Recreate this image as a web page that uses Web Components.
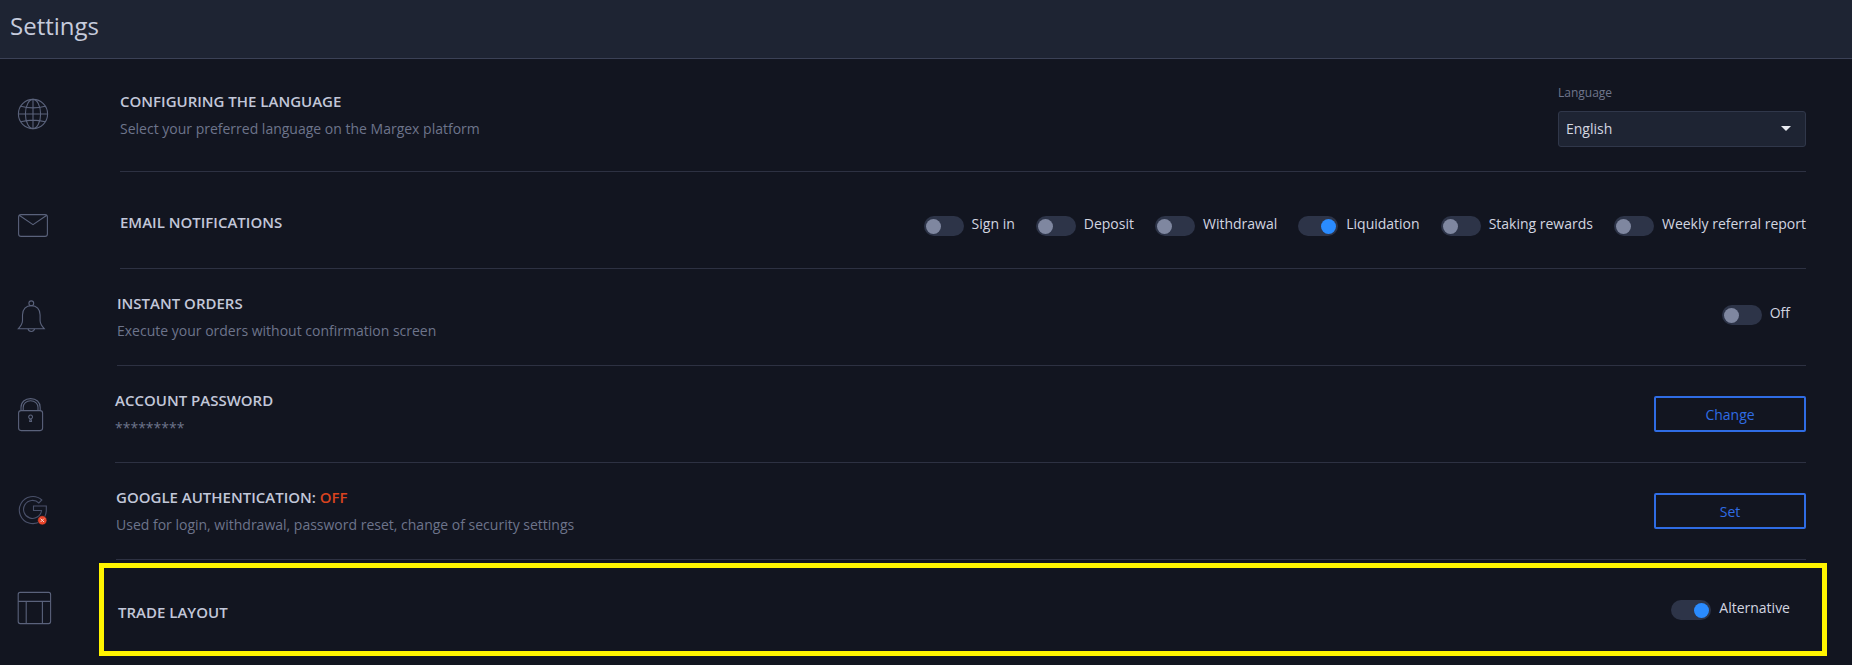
<!DOCTYPE html>
<html lang="en"><head><meta charset="utf-8"><title>Settings</title>
<style>
html,body{margin:0;padding:0;background:#121520;}
body{font-family:"Open Sans",sans-serif;width:1852px;height:665px;overflow:hidden;}
svg{overflow:visible;}
</style></head><body>
<template id="t-page"><style>
:host{display:block;}
header{height:58px;background:#1e2433;border-bottom:1px solid #3b4156;display:flex;align-items:center;padding-left:10px;}
h1{margin:-6px 0 0;font:400 24px/32px "Open Sans",sans-serif;color:#c6cbdc;}
</style><header><h1><slot name="title"></slot></h1></header><slot></slot></template>

<template id="t-row"><style>
:host{display:flex;height:97px;box-sizing:border-box;--left:120px;--nudge:0px;--icon-nudge:0px;}
:host([tall]){height:113px;}
.icon{flex:none;box-sizing:border-box;width:var(--left);padding-left:18px;display:flex;align-items:center;margin-top:var(--icon-nudge);}
.icon ::slotted(*){flex:none;}
.body{width:calc(1806px - var(--left));box-sizing:border-box;display:flex;align-items:center;justify-content:space-between;border-bottom:1px solid #2d3142;}
:host([highlighted]) .icon{width:99px;}
:host([highlighted]) .body{width:1728px;height:93px;margin-top:3px;border:5px solid #fff400;padding:1px 32px 0 14px;}
.side{display:flex;align-items:center;}
h2{margin:var(--nudge) 0 0;font:600 15px/28px "Open Sans",sans-serif;color:#c2c7d9;text-transform:uppercase;}
</style><div class="icon"><slot name="icon"></slot></div>
<div class="body"><div class="text"><h2><slot name="title"></slot></h2><slot name="sub"></slot></div><div class="side"><slot></slot></div></div></template>

<template id="t-sub"><style>:host{display:block;font:400 14px/28px "Open Sans",sans-serif;color:#6d748b;}</style><slot></slot></template>

<template id="t-toggle"><style>
:host{display:inline-flex;align-items:flex-start;gap:8px;font:400 14px/16px "Open Sans",sans-serif;color:#d3d6e0;}
.track{width:40px;height:20px;border-radius:10px;background:#2d3448;position:relative;flex:none;}
.knob{position:absolute;top:2.5px;left:2px;width:15px;height:15px;border-radius:50%;background:#7f87a0;}
:host([on]) .knob{left:22.5px;background:#2a8bff;}
</style><span class="track"><span class="knob"></span></span><span><slot></slot></span></template>

<template id="t-select"><style>
:host{display:block;width:248px;margin-top:1px;}
label{display:block;font:400 12px/16px "Open Sans",sans-serif;color:#6f768c;margin-bottom:10px;}
.box{height:36px;box-sizing:border-box;background:#1e2433;border:1px solid #30374a;border-radius:3px;display:flex;align-items:center;justify-content:space-between;padding:0 14px 0 7px;font:400 14px "Open Sans",sans-serif;color:#d3d6e0;}
.arrow{width:0;height:0;border-left:5px solid transparent;border-right:5px solid transparent;border-top:5px solid #e8eaf0;}
</style><label><slot name="label"></slot></label><div class="box"><span><slot></slot></span><span class="arrow"></span></div></template>

<template id="t-btn"><style>
:host{display:flex;align-items:center;justify-content:center;width:152px;height:36px;box-sizing:border-box;border:2px solid #2f6ce4;border-radius:2px;font:400 14px "Open Sans",sans-serif;color:#2f6ce4;}
</style><slot></slot></template>

<template id="t-group"><style>:host{display:flex;align-items:center;gap:21px;margin-top:12px;}</style><slot></slot></template>

<settings-page>
<span slot="title">Settings</span>

<settings-row tall style="--icon-nudge:-3px">
 <svg slot="icon" width="32" height="32" viewBox="18 98 32 32" fill="none" stroke="#5a627b" stroke-width="1.1"><circle cx="33" cy="114" r="14.6"/><ellipse cx="33" cy="114" rx="7.6" ry="14.6"/><path d="M33 99.4V128.6M18.4 114H47.6M20.8 106.2Q33 109.5 45.2 106.2M20.8 121.8Q33 118.5 45.2 121.8"/></svg>
 <span slot="title">Configuring the language</span>
 <set-sub slot="sub">Select your preferred language on the Margex platform</set-sub>
 <lang-select><span slot="label">Language</span>English</lang-select>
</settings-row>

<settings-row style="--icon-nudge:9px;--nudge:4px">
 <svg slot="icon" width="30" height="24" viewBox="18 213 30 24" fill="none" stroke="#5a627b" stroke-width="1.1"><rect x="18.6" y="214.6" width="28.8" height="21.8" rx="2.5"/><path d="M19.2 215.2L33 224.6L46.8 215.2"/></svg>
 <span slot="title">Email notifications</span>
 <toggle-group>
  <set-toggle>Sign in</set-toggle><set-toggle>Deposit</set-toggle><set-toggle>Withdrawal</set-toggle><set-toggle on>Liquidation</set-toggle><set-toggle>Staking rewards</set-toggle><set-toggle>Weekly referral report</set-toggle>
 </toggle-group>
</settings-row>

<settings-row style="--left:117px">
 <svg slot="icon" width="28" height="35" viewBox="18 300 28 35" fill="none" stroke="#5a627b" stroke-width="1.1"><circle cx="31.3" cy="303.3" r="2.4"/><path d="M31.3 305.6C26 305.6 22.5 309.5 22.5 315V320.5C22.5 323.5 20.8 326 18.4 328.7H44.2C41.8 326 40.1 323.5 40.1 320.5V315C40.1 309.5 36.6 305.6 31.3 305.6Z"/><path d="M28 328.9A3.4 3.4 0 0 0 34.6 328.9"/></svg>
 <span slot="title">Instant orders</span>
 <set-sub slot="sub">Execute your orders without confirmation screen</set-sub>
 <set-toggle style="margin:-4px 16px 0 0">Off</set-toggle>
</settings-row>

<settings-row style="--left:115px;--icon-nudge:1px">
 <svg slot="icon" width="26" height="34" viewBox="18 398 26 34" fill="none" stroke="#5a627b" stroke-width="1.1"><rect x="18.6" y="410.6" width="24" height="20" rx="2.5"/><path d="M21 410.5V407.5C21 402 25 398.6 30.6 398.6S40.2 402 40.2 407.5V410.5M23.2 410.5V407.5C23.2 403.4 26.4 400.8 30.6 400.8S38 403.4 38 407.5V410.5"/><path d="M29.7 421.5H31.5L31.1 418.8A1.9 1.9 0 1 0 30.1 418.8Z"/></svg>
 <span slot="title">Account password</span>
 <set-sub slot="sub">*********</set-sub>
 <set-button>Change</set-button>
</settings-row>

<settings-row style="--left:116px;--icon-nudge:-1px">
 <svg slot="icon" width="32" height="34" viewBox="18 494 32 34" fill="none" stroke="#4a516a" stroke-width="1.1"><path d="M41.8 500A13.5 13.5 0 1 0 46.3 511V506H33.5V510.5H41.5A9 9 0 1 1 38.9 503Z"/><circle cx="42.3" cy="520.3" r="4.6" fill="#e8442a" stroke="#121520" stroke-width=".6"/><path d="M40.6 518.6L44 522M44 518.6L40.6 522" stroke="#f6d5ce" stroke-width="1"/></svg>
 <span slot="title">Google authentication: <off-flag>Off</off-flag></span>
 <set-sub slot="sub">Used for login, withdrawal, password reset, change of security settings</set-sub>
 <set-button>Set</set-button>
</settings-row>

<settings-row highlighted style="--nudge:4px;--icon-nudge:-1px">
 <svg slot="icon" width="34" height="34" viewBox="18 591 34 34" fill="none" stroke="#5a627b" stroke-width="1.1"><rect x="18.2" y="592.4" width="32.4" height="31.2" rx="2"/><path d="M18.2 601.4H50.6M26.2 601.4V623.6M42.4 601.4V623.6"/></svg>
 <span slot="title">Trade layout</span>
 <set-toggle on>Alternative</set-toggle>
</settings-row>
</settings-page>

<script>
const make=(name,tpl)=>customElements.define(name,class extends HTMLElement{
  constructor(){super();this.attachShadow({mode:"open"}).appendChild(document.getElementById(tpl).content.cloneNode(true));}
});
make("settings-page","t-page");
make("settings-row","t-row");
make("set-sub","t-sub");
make("set-toggle","t-toggle");
make("lang-select","t-select");
make("set-button","t-btn");
make("toggle-group","t-group");
customElements.define("off-flag",class extends HTMLElement{
  constructor(){super();this.attachShadow({mode:"open"}).innerHTML='<style>:host{display:inline;color:#d9431f;}</style><slot></slot>';}
});
</script>
</body></html>
